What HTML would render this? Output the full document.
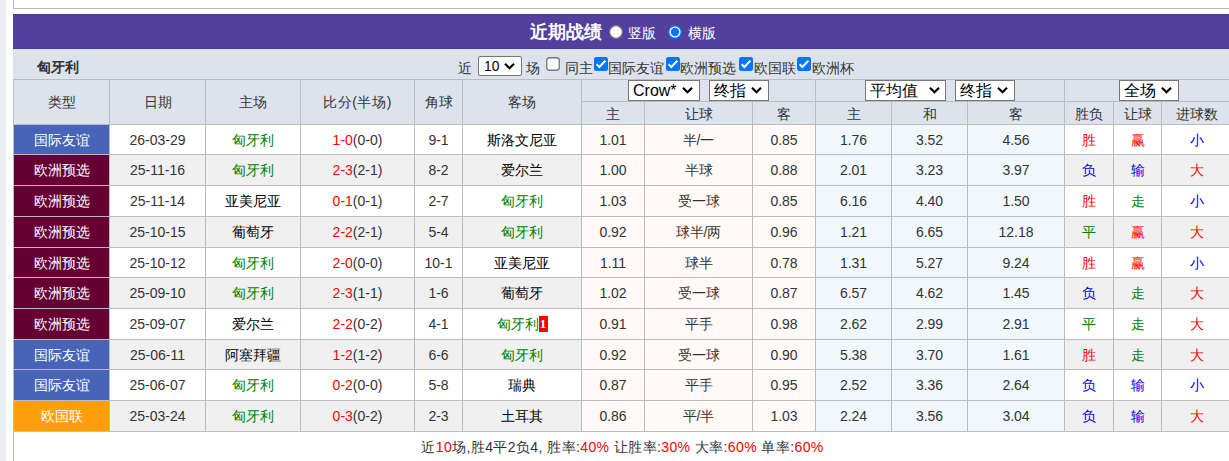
<!DOCTYPE html><html><head><meta charset="utf-8"><style>
html,body{margin:0;padding:0}
body{width:1229px;height:461px;overflow:hidden;position:relative;background:#fff;font-family:"Liberation Sans", sans-serif;font-size:14px}
.badge{display:inline-block;vertical-align:top;background:#f00;color:#fff;font-weight:bold;font-family:'Liberation Serif',serif;font-size:13px;line-height:16px;height:16px;width:9px;text-align:center;position:relative;top:0px}
</style></head><body><div style="position:absolute;left:0px;top:0px;width:6px;height:461px;background:#ebeef3"></div>
<div style="position:absolute;left:13px;top:-10px;width:1229px;height:18px;border-left:1px solid #bcbcbc;border-bottom:1px solid #b9b9b9;background:#fff"></div>
<div style="position:absolute;left:13px;top:14px;width:1216px;height:35px;background:#52409c;border-top:1px solid #49399a;border-bottom:1px solid #49399a;box-sizing:border-box"></div>
<div style="position:absolute;left:530px;top:23px;line-height:14px;white-space:nowrap;font-size:18px;font-weight:bold;color:#fff;line-height:18px">近期战绩</div>
<div style="position:absolute;left:609px;top:25px;width:14px;height:14px"><svg width="14" height="14" viewBox="0 0 14 14" style="display:block"><circle cx="7" cy="7" r="6.4" fill="#fff" stroke="#767676" stroke-width="1.2"/></svg></div>
<div style="position:absolute;left:628px;top:26px;line-height:14px;white-space:nowrap;color:#fff">竖版</div>
<div style="position:absolute;left:668px;top:25px;width:14px;height:14px"><svg width="14" height="14" viewBox="0 0 14 14" style="display:block"><circle cx="7" cy="7" r="7" fill="#0075ff"/><circle cx="7" cy="7" r="5.6" fill="#fff"/><circle cx="7" cy="7" r="4.2" fill="#0075ff"/></svg></div>
<div style="position:absolute;left:688px;top:26px;line-height:14px;white-space:nowrap;color:#fff">横版</div>
<div style="position:absolute;left:13px;top:49px;width:1216px;height:30px;background:#dce3ed"></div>
<div style="position:absolute;left:37px;top:60px;line-height:14px;white-space:nowrap;font-weight:bold;color:#333">匈牙利</div>
<div style="position:absolute;left:458px;top:61px;line-height:14px;white-space:nowrap;color:#333">近</div>
<div style="position:absolute;left:478px;top:56px;width:44px;height:20px;box-sizing:border-box;border:1px solid #767676;border-radius:2px;background:#fff"></div>
<div style="position:absolute;left:484px;top:58px;line-height:14px;white-space:nowrap;font-size:15px;color:#000;line-height:15px;transform:scaleX(0.92);transform-origin:0 0">10</div>
<div style="position:absolute;left:504px;top:63px;width:11px;height:7px"><svg width="11" height="7" viewBox="0 0 11 7" style="display:block"><path d="M1 0.8 L5.5 5.2 L10 0.8" fill="none" stroke="#000" stroke-width="2.2"/></svg></div>
<div style="position:absolute;left:526px;top:61px;line-height:14px;white-space:nowrap;color:#333">场</div>
<div style="position:absolute;left:546px;top:57px;width:14px;height:14px"><svg width="14" height="14" viewBox="0 0 14 14" style="display:block"><rect x="0.75" y="0.75" width="12.5" height="12.5" rx="2.5" fill="#fff" stroke="#767676" stroke-width="1.3"/></svg></div>
<div style="position:absolute;left:565px;top:61px;line-height:14px;white-space:nowrap;color:#333">同主</div>
<div style="position:absolute;left:594px;top:57px;width:14px;height:14px"><svg width="14" height="14" viewBox="0 0 14 14" style="display:block"><rect x="0" y="0" width="14" height="14" rx="2.5" fill="#0075ff"/><path d="M2.6 7.2 L5.4 10 L11.4 3.6" fill="none" stroke="#fff" stroke-width="2.1"/></svg></div>
<div style="position:absolute;left:608px;top:61px;line-height:14px;white-space:nowrap;color:#333">国际友谊</div>
<div style="position:absolute;left:666px;top:57px;width:14px;height:14px"><svg width="14" height="14" viewBox="0 0 14 14" style="display:block"><rect x="0" y="0" width="14" height="14" rx="2.5" fill="#0075ff"/><path d="M2.6 7.2 L5.4 10 L11.4 3.6" fill="none" stroke="#fff" stroke-width="2.1"/></svg></div>
<div style="position:absolute;left:680px;top:61px;line-height:14px;white-space:nowrap;color:#333">欧洲预选</div>
<div style="position:absolute;left:739px;top:57px;width:14px;height:14px"><svg width="14" height="14" viewBox="0 0 14 14" style="display:block"><rect x="0" y="0" width="14" height="14" rx="2.5" fill="#0075ff"/><path d="M2.6 7.2 L5.4 10 L11.4 3.6" fill="none" stroke="#fff" stroke-width="2.1"/></svg></div>
<div style="position:absolute;left:754px;top:61px;line-height:14px;white-space:nowrap;color:#333">欧国联</div>
<div style="position:absolute;left:797px;top:57px;width:14px;height:14px"><svg width="14" height="14" viewBox="0 0 14 14" style="display:block"><rect x="0" y="0" width="14" height="14" rx="2.5" fill="#0075ff"/><path d="M2.6 7.2 L5.4 10 L11.4 3.6" fill="none" stroke="#fff" stroke-width="2.1"/></svg></div>
<div style="position:absolute;left:812px;top:61px;line-height:14px;white-space:nowrap;color:#333">欧洲杯</div>
<div style="position:absolute;left:13px;top:79px;width:1216px;height:45px;background:#dce3ed"></div>
<div style="position:absolute;left:14px;top:80px;width:95px;height:44px;display:flex;align-items:center;justify-content:center;white-space:nowrap;color:#333;font-size:14px"><span style="position:relative;top:1px">类型</span></div>
<div style="position:absolute;left:110px;top:80px;width:95px;height:44px;display:flex;align-items:center;justify-content:center;white-space:nowrap;color:#333;font-size:14px"><span style="position:relative;top:1px">日期</span></div>
<div style="position:absolute;left:206px;top:80px;width:94px;height:44px;display:flex;align-items:center;justify-content:center;white-space:nowrap;color:#333;font-size:14px"><span style="position:relative;top:1px">主场</span></div>
<div style="position:absolute;left:301px;top:80px;width:113px;height:44px;display:flex;align-items:center;justify-content:center;white-space:nowrap;color:#333;font-size:14px;letter-spacing:0.6px"><span style="position:relative;top:1px">比分(半场)</span></div>
<div style="position:absolute;left:415px;top:80px;width:47px;height:44px;display:flex;align-items:center;justify-content:center;white-space:nowrap;color:#333;font-size:14px"><span style="position:relative;top:1px">角球</span></div>
<div style="position:absolute;left:463px;top:80px;width:118px;height:44px;display:flex;align-items:center;justify-content:center;white-space:nowrap;color:#333;font-size:14px"><span style="position:relative;top:1px">客场</span></div>
<div style="position:absolute;left:582px;top:102px;width:62px;height:22px;display:flex;align-items:center;justify-content:center;white-space:nowrap;color:#333;font-size:14px"><span style="position:relative;top:2px">主</span></div>
<div style="position:absolute;left:645px;top:102px;width:107px;height:22px;display:flex;align-items:center;justify-content:center;white-space:nowrap;color:#333;font-size:14px"><span style="position:relative;top:2px">让球</span></div>
<div style="position:absolute;left:753px;top:102px;width:62px;height:22px;display:flex;align-items:center;justify-content:center;white-space:nowrap;color:#333;font-size:14px"><span style="position:relative;top:2px">客</span></div>
<div style="position:absolute;left:816px;top:102px;width:75px;height:22px;display:flex;align-items:center;justify-content:center;white-space:nowrap;color:#333;font-size:14px"><span style="position:relative;top:2px">主</span></div>
<div style="position:absolute;left:892px;top:102px;width:75px;height:22px;display:flex;align-items:center;justify-content:center;white-space:nowrap;color:#333;font-size:14px"><span style="position:relative;top:2px">和</span></div>
<div style="position:absolute;left:968px;top:102px;width:96px;height:22px;display:flex;align-items:center;justify-content:center;white-space:nowrap;color:#333;font-size:14px"><span style="position:relative;top:2px">客</span></div>
<div style="position:absolute;left:1065px;top:102px;width:48px;height:22px;display:flex;align-items:center;justify-content:center;white-space:nowrap;color:#333;font-size:14px"><span style="position:relative;top:2px">胜负</span></div>
<div style="position:absolute;left:1114px;top:102px;width:47px;height:22px;display:flex;align-items:center;justify-content:center;white-space:nowrap;color:#333;font-size:14px"><span style="position:relative;top:2px">让球</span></div>
<div style="position:absolute;left:1162px;top:102px;width:70px;height:22px;display:flex;align-items:center;justify-content:center;white-space:nowrap;color:#333;font-size:14px"><span style="position:relative;top:2px">进球数</span></div>
<div style="position:absolute;left:628px;top:80px;width:72px;height:21px;box-sizing:border-box;border:1px solid #767676;background:#fff"></div>
<div style="position:absolute;left:633px;top:83px;line-height:14px;white-space:nowrap;font-size:16px;color:#000;line-height:16px">Crow*</div>
<div style="position:absolute;left:682px;top:87px;width:11px;height:7px"><svg width="11" height="7" viewBox="0 0 11 7" style="display:block"><path d="M1 0.8 L5.5 5.2 L10 0.8" fill="none" stroke="#000" stroke-width="2.2"/></svg></div>
<div style="position:absolute;left:709px;top:80px;width:60px;height:21px;box-sizing:border-box;border:1px solid #767676;background:#fff"></div>
<div style="position:absolute;left:714px;top:83px;line-height:14px;white-space:nowrap;font-size:16px;color:#000;line-height:16px">终指</div>
<div style="position:absolute;left:751px;top:87px;width:11px;height:7px"><svg width="11" height="7" viewBox="0 0 11 7" style="display:block"><path d="M1 0.8 L5.5 5.2 L10 0.8" fill="none" stroke="#000" stroke-width="2.2"/></svg></div>
<div style="position:absolute;left:865px;top:80px;width:81px;height:21px;box-sizing:border-box;border:1px solid #767676;background:#fff"></div>
<div style="position:absolute;left:870px;top:83px;line-height:14px;white-space:nowrap;font-size:16px;color:#000;line-height:16px">平均值</div>
<div style="position:absolute;left:929px;top:87px;width:11px;height:7px"><svg width="11" height="7" viewBox="0 0 11 7" style="display:block"><path d="M1 0.8 L5.5 5.2 L10 0.8" fill="none" stroke="#000" stroke-width="2.2"/></svg></div>
<div style="position:absolute;left:955px;top:80px;width:60px;height:21px;box-sizing:border-box;border:1px solid #767676;background:#fff"></div>
<div style="position:absolute;left:960px;top:83px;line-height:14px;white-space:nowrap;font-size:16px;color:#000;line-height:16px">终指</div>
<div style="position:absolute;left:997px;top:87px;width:11px;height:7px"><svg width="11" height="7" viewBox="0 0 11 7" style="display:block"><path d="M1 0.8 L5.5 5.2 L10 0.8" fill="none" stroke="#000" stroke-width="2.2"/></svg></div>
<div style="position:absolute;left:1119px;top:80px;width:60px;height:21px;box-sizing:border-box;border:1px solid #767676;background:#fff"></div>
<div style="position:absolute;left:1124px;top:83px;line-height:14px;white-space:nowrap;font-size:16px;color:#000;line-height:16px">全场</div>
<div style="position:absolute;left:1161px;top:87px;width:11px;height:7px"><svg width="11" height="7" viewBox="0 0 11 7" style="display:block"><path d="M1 0.8 L5.5 5.2 L10 0.8" fill="none" stroke="#000" stroke-width="2.2"/></svg></div>
<div style="position:absolute;left:14px;top:125px;width:95px;height:29px;display:flex;align-items:center;justify-content:center;white-space:nowrap;font-size:14px;color:#333;background:#4764b8;color:#fff;"><span style="position:relative;top:1px">国际友谊</span></div>
<div style="position:absolute;left:110px;top:125px;width:95px;height:29px;display:flex;align-items:center;justify-content:center;white-space:nowrap;font-size:14px;color:#333;"><span style="position:relative;top:0px">26-03-29</span></div>
<div style="position:absolute;left:206px;top:125px;width:94px;height:29px;display:flex;align-items:center;justify-content:center;white-space:nowrap;font-size:14px;color:#333;"><span style="position:relative;top:1px"><span style="color:#008000">匈牙利</span></span></div>
<div style="position:absolute;left:301px;top:125px;width:113px;height:29px;display:flex;align-items:center;justify-content:center;white-space:nowrap;font-size:14px;color:#333;"><span style="position:relative;top:0px"><span style="color:#ff0000">1-0</span>(0-0)</span></div>
<div style="position:absolute;left:415px;top:125px;width:47px;height:29px;display:flex;align-items:center;justify-content:center;white-space:nowrap;font-size:14px;color:#333;"><span style="position:relative;top:0px">9-1</span></div>
<div style="position:absolute;left:463px;top:125px;width:118px;height:29px;display:flex;align-items:center;justify-content:center;white-space:nowrap;font-size:14px;color:#333;"><span style="position:relative;top:1px"><span style="color:#000">斯洛文尼亚</span></span></div>
<div style="position:absolute;left:582px;top:125px;width:62px;height:29px;display:flex;align-items:center;justify-content:center;white-space:nowrap;font-size:14px;color:#333;background:#fffaf7;"><span style="position:relative;top:0px">1.01</span></div>
<div style="position:absolute;left:645px;top:125px;width:107px;height:29px;display:flex;align-items:center;justify-content:center;white-space:nowrap;font-size:14px;color:#333;background:#fffaf7;"><span style="position:relative;top:1px">半/一</span></div>
<div style="position:absolute;left:753px;top:125px;width:62px;height:29px;display:flex;align-items:center;justify-content:center;white-space:nowrap;font-size:14px;color:#333;background:#fffaf7;"><span style="position:relative;top:0px">0.85</span></div>
<div style="position:absolute;left:816px;top:125px;width:75px;height:29px;display:flex;align-items:center;justify-content:center;white-space:nowrap;font-size:14px;color:#333;background:#f0f8fc;"><span style="position:relative;top:0px">1.76</span></div>
<div style="position:absolute;left:892px;top:125px;width:75px;height:29px;display:flex;align-items:center;justify-content:center;white-space:nowrap;font-size:14px;color:#333;background:#f0f8fc;"><span style="position:relative;top:0px">3.52</span></div>
<div style="position:absolute;left:968px;top:125px;width:96px;height:29px;display:flex;align-items:center;justify-content:center;white-space:nowrap;font-size:14px;color:#333;background:#f0f8fc;"><span style="position:relative;top:0px">4.56</span></div>
<div style="position:absolute;left:1065px;top:125px;width:48px;height:29px;display:flex;align-items:center;justify-content:center;white-space:nowrap;font-size:14px;color:#333;"><span style="position:relative;top:1px"><span style="color:#ff0000">胜</span></span></div>
<div style="position:absolute;left:1114px;top:125px;width:47px;height:29px;display:flex;align-items:center;justify-content:center;white-space:nowrap;font-size:14px;color:#333;"><span style="position:relative;top:1px"><span style="color:#ff0000">赢</span></span></div>
<div style="position:absolute;left:1162px;top:125px;width:70px;height:29px;display:flex;align-items:center;justify-content:center;white-space:nowrap;font-size:14px;color:#333;"><span style="position:relative;top:1px"><span style="color:#0000ff">小</span></span></div>
<div style="position:absolute;left:14px;top:155px;width:95px;height:30px;display:flex;align-items:center;justify-content:center;white-space:nowrap;font-size:14px;color:#333;background:#660033;color:#fff;"><span style="position:relative;top:1px">欧洲预选</span></div>
<div style="position:absolute;left:110px;top:155px;width:95px;height:30px;display:flex;align-items:center;justify-content:center;white-space:nowrap;font-size:14px;color:#333;background:#f0f0f0;"><span style="position:relative;top:0px">25-11-16</span></div>
<div style="position:absolute;left:206px;top:155px;width:94px;height:30px;display:flex;align-items:center;justify-content:center;white-space:nowrap;font-size:14px;color:#333;background:#f0f0f0;"><span style="position:relative;top:1px"><span style="color:#008000">匈牙利</span></span></div>
<div style="position:absolute;left:301px;top:155px;width:113px;height:30px;display:flex;align-items:center;justify-content:center;white-space:nowrap;font-size:14px;color:#333;background:#f0f0f0;"><span style="position:relative;top:0px"><span style="color:#ff0000">2-3</span>(2-1)</span></div>
<div style="position:absolute;left:415px;top:155px;width:47px;height:30px;display:flex;align-items:center;justify-content:center;white-space:nowrap;font-size:14px;color:#333;background:#f0f0f0;"><span style="position:relative;top:0px">8-2</span></div>
<div style="position:absolute;left:463px;top:155px;width:118px;height:30px;display:flex;align-items:center;justify-content:center;white-space:nowrap;font-size:14px;color:#333;background:#f0f0f0;"><span style="position:relative;top:1px"><span style="color:#000">爱尔兰</span></span></div>
<div style="position:absolute;left:582px;top:155px;width:62px;height:30px;display:flex;align-items:center;justify-content:center;white-space:nowrap;font-size:14px;color:#333;background:#fffaf7;"><span style="position:relative;top:0px">1.00</span></div>
<div style="position:absolute;left:645px;top:155px;width:107px;height:30px;display:flex;align-items:center;justify-content:center;white-space:nowrap;font-size:14px;color:#333;background:#fffaf7;"><span style="position:relative;top:1px">半球</span></div>
<div style="position:absolute;left:753px;top:155px;width:62px;height:30px;display:flex;align-items:center;justify-content:center;white-space:nowrap;font-size:14px;color:#333;background:#fffaf7;"><span style="position:relative;top:0px">0.88</span></div>
<div style="position:absolute;left:816px;top:155px;width:75px;height:30px;display:flex;align-items:center;justify-content:center;white-space:nowrap;font-size:14px;color:#333;background:#f0f8fc;"><span style="position:relative;top:0px">2.01</span></div>
<div style="position:absolute;left:892px;top:155px;width:75px;height:30px;display:flex;align-items:center;justify-content:center;white-space:nowrap;font-size:14px;color:#333;background:#f0f8fc;"><span style="position:relative;top:0px">3.23</span></div>
<div style="position:absolute;left:968px;top:155px;width:96px;height:30px;display:flex;align-items:center;justify-content:center;white-space:nowrap;font-size:14px;color:#333;background:#f0f8fc;"><span style="position:relative;top:0px">3.97</span></div>
<div style="position:absolute;left:1065px;top:155px;width:48px;height:30px;display:flex;align-items:center;justify-content:center;white-space:nowrap;font-size:14px;color:#333;background:#f0f0f0;"><span style="position:relative;top:1px"><span style="color:#0000ff">负</span></span></div>
<div style="position:absolute;left:1114px;top:155px;width:47px;height:30px;display:flex;align-items:center;justify-content:center;white-space:nowrap;font-size:14px;color:#333;background:#f0f0f0;"><span style="position:relative;top:1px"><span style="color:#0000ff">输</span></span></div>
<div style="position:absolute;left:1162px;top:155px;width:70px;height:30px;display:flex;align-items:center;justify-content:center;white-space:nowrap;font-size:14px;color:#333;background:#f0f0f0;"><span style="position:relative;top:1px"><span style="color:#ff0000">大</span></span></div>
<div style="position:absolute;left:14px;top:186px;width:95px;height:30px;display:flex;align-items:center;justify-content:center;white-space:nowrap;font-size:14px;color:#333;background:#660033;color:#fff;"><span style="position:relative;top:1px">欧洲预选</span></div>
<div style="position:absolute;left:110px;top:186px;width:95px;height:30px;display:flex;align-items:center;justify-content:center;white-space:nowrap;font-size:14px;color:#333;"><span style="position:relative;top:0px">25-11-14</span></div>
<div style="position:absolute;left:206px;top:186px;width:94px;height:30px;display:flex;align-items:center;justify-content:center;white-space:nowrap;font-size:14px;color:#333;"><span style="position:relative;top:1px"><span style="color:#000">亚美尼亚</span></span></div>
<div style="position:absolute;left:301px;top:186px;width:113px;height:30px;display:flex;align-items:center;justify-content:center;white-space:nowrap;font-size:14px;color:#333;"><span style="position:relative;top:0px"><span style="color:#ff0000">0-1</span>(0-1)</span></div>
<div style="position:absolute;left:415px;top:186px;width:47px;height:30px;display:flex;align-items:center;justify-content:center;white-space:nowrap;font-size:14px;color:#333;"><span style="position:relative;top:0px">2-7</span></div>
<div style="position:absolute;left:463px;top:186px;width:118px;height:30px;display:flex;align-items:center;justify-content:center;white-space:nowrap;font-size:14px;color:#333;"><span style="position:relative;top:1px"><span style="color:#008000">匈牙利</span></span></div>
<div style="position:absolute;left:582px;top:186px;width:62px;height:30px;display:flex;align-items:center;justify-content:center;white-space:nowrap;font-size:14px;color:#333;background:#fffaf7;"><span style="position:relative;top:0px">1.03</span></div>
<div style="position:absolute;left:645px;top:186px;width:107px;height:30px;display:flex;align-items:center;justify-content:center;white-space:nowrap;font-size:14px;color:#333;background:#fffaf7;"><span style="position:relative;top:1px">受一球</span></div>
<div style="position:absolute;left:753px;top:186px;width:62px;height:30px;display:flex;align-items:center;justify-content:center;white-space:nowrap;font-size:14px;color:#333;background:#fffaf7;"><span style="position:relative;top:0px">0.85</span></div>
<div style="position:absolute;left:816px;top:186px;width:75px;height:30px;display:flex;align-items:center;justify-content:center;white-space:nowrap;font-size:14px;color:#333;background:#f0f8fc;"><span style="position:relative;top:0px">6.16</span></div>
<div style="position:absolute;left:892px;top:186px;width:75px;height:30px;display:flex;align-items:center;justify-content:center;white-space:nowrap;font-size:14px;color:#333;background:#f0f8fc;"><span style="position:relative;top:0px">4.40</span></div>
<div style="position:absolute;left:968px;top:186px;width:96px;height:30px;display:flex;align-items:center;justify-content:center;white-space:nowrap;font-size:14px;color:#333;background:#f0f8fc;"><span style="position:relative;top:0px">1.50</span></div>
<div style="position:absolute;left:1065px;top:186px;width:48px;height:30px;display:flex;align-items:center;justify-content:center;white-space:nowrap;font-size:14px;color:#333;"><span style="position:relative;top:1px"><span style="color:#ff0000">胜</span></span></div>
<div style="position:absolute;left:1114px;top:186px;width:47px;height:30px;display:flex;align-items:center;justify-content:center;white-space:nowrap;font-size:14px;color:#333;"><span style="position:relative;top:1px"><span style="color:#008000">走</span></span></div>
<div style="position:absolute;left:1162px;top:186px;width:70px;height:30px;display:flex;align-items:center;justify-content:center;white-space:nowrap;font-size:14px;color:#333;"><span style="position:relative;top:1px"><span style="color:#0000ff">小</span></span></div>
<div style="position:absolute;left:14px;top:217px;width:95px;height:30px;display:flex;align-items:center;justify-content:center;white-space:nowrap;font-size:14px;color:#333;background:#660033;color:#fff;"><span style="position:relative;top:1px">欧洲预选</span></div>
<div style="position:absolute;left:110px;top:217px;width:95px;height:30px;display:flex;align-items:center;justify-content:center;white-space:nowrap;font-size:14px;color:#333;background:#f0f0f0;"><span style="position:relative;top:0px">25-10-15</span></div>
<div style="position:absolute;left:206px;top:217px;width:94px;height:30px;display:flex;align-items:center;justify-content:center;white-space:nowrap;font-size:14px;color:#333;background:#f0f0f0;"><span style="position:relative;top:1px"><span style="color:#000">葡萄牙</span></span></div>
<div style="position:absolute;left:301px;top:217px;width:113px;height:30px;display:flex;align-items:center;justify-content:center;white-space:nowrap;font-size:14px;color:#333;background:#f0f0f0;"><span style="position:relative;top:0px"><span style="color:#ff0000">2-2</span>(2-1)</span></div>
<div style="position:absolute;left:415px;top:217px;width:47px;height:30px;display:flex;align-items:center;justify-content:center;white-space:nowrap;font-size:14px;color:#333;background:#f0f0f0;"><span style="position:relative;top:0px">5-4</span></div>
<div style="position:absolute;left:463px;top:217px;width:118px;height:30px;display:flex;align-items:center;justify-content:center;white-space:nowrap;font-size:14px;color:#333;background:#f0f0f0;"><span style="position:relative;top:1px"><span style="color:#008000">匈牙利</span></span></div>
<div style="position:absolute;left:582px;top:217px;width:62px;height:30px;display:flex;align-items:center;justify-content:center;white-space:nowrap;font-size:14px;color:#333;background:#fffaf7;"><span style="position:relative;top:0px">0.92</span></div>
<div style="position:absolute;left:645px;top:217px;width:107px;height:30px;display:flex;align-items:center;justify-content:center;white-space:nowrap;font-size:14px;color:#333;background:#fffaf7;"><span style="position:relative;top:1px">球半/两</span></div>
<div style="position:absolute;left:753px;top:217px;width:62px;height:30px;display:flex;align-items:center;justify-content:center;white-space:nowrap;font-size:14px;color:#333;background:#fffaf7;"><span style="position:relative;top:0px">0.96</span></div>
<div style="position:absolute;left:816px;top:217px;width:75px;height:30px;display:flex;align-items:center;justify-content:center;white-space:nowrap;font-size:14px;color:#333;background:#f0f8fc;"><span style="position:relative;top:0px">1.21</span></div>
<div style="position:absolute;left:892px;top:217px;width:75px;height:30px;display:flex;align-items:center;justify-content:center;white-space:nowrap;font-size:14px;color:#333;background:#f0f8fc;"><span style="position:relative;top:0px">6.65</span></div>
<div style="position:absolute;left:968px;top:217px;width:96px;height:30px;display:flex;align-items:center;justify-content:center;white-space:nowrap;font-size:14px;color:#333;background:#f0f8fc;"><span style="position:relative;top:0px">12.18</span></div>
<div style="position:absolute;left:1065px;top:217px;width:48px;height:30px;display:flex;align-items:center;justify-content:center;white-space:nowrap;font-size:14px;color:#333;background:#f0f0f0;"><span style="position:relative;top:1px"><span style="color:#008000">平</span></span></div>
<div style="position:absolute;left:1114px;top:217px;width:47px;height:30px;display:flex;align-items:center;justify-content:center;white-space:nowrap;font-size:14px;color:#333;background:#f0f0f0;"><span style="position:relative;top:1px"><span style="color:#ff0000">赢</span></span></div>
<div style="position:absolute;left:1162px;top:217px;width:70px;height:30px;display:flex;align-items:center;justify-content:center;white-space:nowrap;font-size:14px;color:#333;background:#f0f0f0;"><span style="position:relative;top:1px"><span style="color:#ff0000">大</span></span></div>
<div style="position:absolute;left:14px;top:248px;width:95px;height:29px;display:flex;align-items:center;justify-content:center;white-space:nowrap;font-size:14px;color:#333;background:#660033;color:#fff;"><span style="position:relative;top:1px">欧洲预选</span></div>
<div style="position:absolute;left:110px;top:248px;width:95px;height:29px;display:flex;align-items:center;justify-content:center;white-space:nowrap;font-size:14px;color:#333;"><span style="position:relative;top:0px">25-10-12</span></div>
<div style="position:absolute;left:206px;top:248px;width:94px;height:29px;display:flex;align-items:center;justify-content:center;white-space:nowrap;font-size:14px;color:#333;"><span style="position:relative;top:1px"><span style="color:#008000">匈牙利</span></span></div>
<div style="position:absolute;left:301px;top:248px;width:113px;height:29px;display:flex;align-items:center;justify-content:center;white-space:nowrap;font-size:14px;color:#333;"><span style="position:relative;top:0px"><span style="color:#ff0000">2-0</span>(0-0)</span></div>
<div style="position:absolute;left:415px;top:248px;width:47px;height:29px;display:flex;align-items:center;justify-content:center;white-space:nowrap;font-size:14px;color:#333;"><span style="position:relative;top:0px">10-1</span></div>
<div style="position:absolute;left:463px;top:248px;width:118px;height:29px;display:flex;align-items:center;justify-content:center;white-space:nowrap;font-size:14px;color:#333;"><span style="position:relative;top:1px"><span style="color:#000">亚美尼亚</span></span></div>
<div style="position:absolute;left:582px;top:248px;width:62px;height:29px;display:flex;align-items:center;justify-content:center;white-space:nowrap;font-size:14px;color:#333;background:#fffaf7;"><span style="position:relative;top:0px">1.11</span></div>
<div style="position:absolute;left:645px;top:248px;width:107px;height:29px;display:flex;align-items:center;justify-content:center;white-space:nowrap;font-size:14px;color:#333;background:#fffaf7;"><span style="position:relative;top:1px">球半</span></div>
<div style="position:absolute;left:753px;top:248px;width:62px;height:29px;display:flex;align-items:center;justify-content:center;white-space:nowrap;font-size:14px;color:#333;background:#fffaf7;"><span style="position:relative;top:0px">0.78</span></div>
<div style="position:absolute;left:816px;top:248px;width:75px;height:29px;display:flex;align-items:center;justify-content:center;white-space:nowrap;font-size:14px;color:#333;background:#f0f8fc;"><span style="position:relative;top:0px">1.31</span></div>
<div style="position:absolute;left:892px;top:248px;width:75px;height:29px;display:flex;align-items:center;justify-content:center;white-space:nowrap;font-size:14px;color:#333;background:#f0f8fc;"><span style="position:relative;top:0px">5.27</span></div>
<div style="position:absolute;left:968px;top:248px;width:96px;height:29px;display:flex;align-items:center;justify-content:center;white-space:nowrap;font-size:14px;color:#333;background:#f0f8fc;"><span style="position:relative;top:0px">9.24</span></div>
<div style="position:absolute;left:1065px;top:248px;width:48px;height:29px;display:flex;align-items:center;justify-content:center;white-space:nowrap;font-size:14px;color:#333;"><span style="position:relative;top:1px"><span style="color:#ff0000">胜</span></span></div>
<div style="position:absolute;left:1114px;top:248px;width:47px;height:29px;display:flex;align-items:center;justify-content:center;white-space:nowrap;font-size:14px;color:#333;"><span style="position:relative;top:1px"><span style="color:#ff0000">赢</span></span></div>
<div style="position:absolute;left:1162px;top:248px;width:70px;height:29px;display:flex;align-items:center;justify-content:center;white-space:nowrap;font-size:14px;color:#333;"><span style="position:relative;top:1px"><span style="color:#0000ff">小</span></span></div>
<div style="position:absolute;left:14px;top:278px;width:95px;height:30px;display:flex;align-items:center;justify-content:center;white-space:nowrap;font-size:14px;color:#333;background:#660033;color:#fff;"><span style="position:relative;top:1px">欧洲预选</span></div>
<div style="position:absolute;left:110px;top:278px;width:95px;height:30px;display:flex;align-items:center;justify-content:center;white-space:nowrap;font-size:14px;color:#333;background:#f0f0f0;"><span style="position:relative;top:0px">25-09-10</span></div>
<div style="position:absolute;left:206px;top:278px;width:94px;height:30px;display:flex;align-items:center;justify-content:center;white-space:nowrap;font-size:14px;color:#333;background:#f0f0f0;"><span style="position:relative;top:1px"><span style="color:#008000">匈牙利</span></span></div>
<div style="position:absolute;left:301px;top:278px;width:113px;height:30px;display:flex;align-items:center;justify-content:center;white-space:nowrap;font-size:14px;color:#333;background:#f0f0f0;"><span style="position:relative;top:0px"><span style="color:#ff0000">2-3</span>(1-1)</span></div>
<div style="position:absolute;left:415px;top:278px;width:47px;height:30px;display:flex;align-items:center;justify-content:center;white-space:nowrap;font-size:14px;color:#333;background:#f0f0f0;"><span style="position:relative;top:0px">1-6</span></div>
<div style="position:absolute;left:463px;top:278px;width:118px;height:30px;display:flex;align-items:center;justify-content:center;white-space:nowrap;font-size:14px;color:#333;background:#f0f0f0;"><span style="position:relative;top:1px"><span style="color:#000">葡萄牙</span></span></div>
<div style="position:absolute;left:582px;top:278px;width:62px;height:30px;display:flex;align-items:center;justify-content:center;white-space:nowrap;font-size:14px;color:#333;background:#fffaf7;"><span style="position:relative;top:0px">1.02</span></div>
<div style="position:absolute;left:645px;top:278px;width:107px;height:30px;display:flex;align-items:center;justify-content:center;white-space:nowrap;font-size:14px;color:#333;background:#fffaf7;"><span style="position:relative;top:1px">受一球</span></div>
<div style="position:absolute;left:753px;top:278px;width:62px;height:30px;display:flex;align-items:center;justify-content:center;white-space:nowrap;font-size:14px;color:#333;background:#fffaf7;"><span style="position:relative;top:0px">0.87</span></div>
<div style="position:absolute;left:816px;top:278px;width:75px;height:30px;display:flex;align-items:center;justify-content:center;white-space:nowrap;font-size:14px;color:#333;background:#f0f8fc;"><span style="position:relative;top:0px">6.57</span></div>
<div style="position:absolute;left:892px;top:278px;width:75px;height:30px;display:flex;align-items:center;justify-content:center;white-space:nowrap;font-size:14px;color:#333;background:#f0f8fc;"><span style="position:relative;top:0px">4.62</span></div>
<div style="position:absolute;left:968px;top:278px;width:96px;height:30px;display:flex;align-items:center;justify-content:center;white-space:nowrap;font-size:14px;color:#333;background:#f0f8fc;"><span style="position:relative;top:0px">1.45</span></div>
<div style="position:absolute;left:1065px;top:278px;width:48px;height:30px;display:flex;align-items:center;justify-content:center;white-space:nowrap;font-size:14px;color:#333;background:#f0f0f0;"><span style="position:relative;top:1px"><span style="color:#0000ff">负</span></span></div>
<div style="position:absolute;left:1114px;top:278px;width:47px;height:30px;display:flex;align-items:center;justify-content:center;white-space:nowrap;font-size:14px;color:#333;background:#f0f0f0;"><span style="position:relative;top:1px"><span style="color:#008000">走</span></span></div>
<div style="position:absolute;left:1162px;top:278px;width:70px;height:30px;display:flex;align-items:center;justify-content:center;white-space:nowrap;font-size:14px;color:#333;background:#f0f0f0;"><span style="position:relative;top:1px"><span style="color:#ff0000">大</span></span></div>
<div style="position:absolute;left:14px;top:309px;width:95px;height:30px;display:flex;align-items:center;justify-content:center;white-space:nowrap;font-size:14px;color:#333;background:#660033;color:#fff;"><span style="position:relative;top:1px">欧洲预选</span></div>
<div style="position:absolute;left:110px;top:309px;width:95px;height:30px;display:flex;align-items:center;justify-content:center;white-space:nowrap;font-size:14px;color:#333;"><span style="position:relative;top:0px">25-09-07</span></div>
<div style="position:absolute;left:206px;top:309px;width:94px;height:30px;display:flex;align-items:center;justify-content:center;white-space:nowrap;font-size:14px;color:#333;"><span style="position:relative;top:1px"><span style="color:#000">爱尔兰</span></span></div>
<div style="position:absolute;left:301px;top:309px;width:113px;height:30px;display:flex;align-items:center;justify-content:center;white-space:nowrap;font-size:14px;color:#333;"><span style="position:relative;top:0px"><span style="color:#ff0000">2-2</span>(0-2)</span></div>
<div style="position:absolute;left:415px;top:309px;width:47px;height:30px;display:flex;align-items:center;justify-content:center;white-space:nowrap;font-size:14px;color:#333;"><span style="position:relative;top:0px">4-1</span></div>
<div style="position:absolute;left:463px;top:309px;width:118px;height:30px;display:flex;align-items:center;justify-content:center;white-space:nowrap;font-size:14px;color:#333;"><span style="position:relative;top:1px"><span style="color:#008000">匈牙利</span><span class="badge">1</span></span></div>
<div style="position:absolute;left:582px;top:309px;width:62px;height:30px;display:flex;align-items:center;justify-content:center;white-space:nowrap;font-size:14px;color:#333;background:#fffaf7;"><span style="position:relative;top:0px">0.91</span></div>
<div style="position:absolute;left:645px;top:309px;width:107px;height:30px;display:flex;align-items:center;justify-content:center;white-space:nowrap;font-size:14px;color:#333;background:#fffaf7;"><span style="position:relative;top:1px">平手</span></div>
<div style="position:absolute;left:753px;top:309px;width:62px;height:30px;display:flex;align-items:center;justify-content:center;white-space:nowrap;font-size:14px;color:#333;background:#fffaf7;"><span style="position:relative;top:0px">0.98</span></div>
<div style="position:absolute;left:816px;top:309px;width:75px;height:30px;display:flex;align-items:center;justify-content:center;white-space:nowrap;font-size:14px;color:#333;background:#f0f8fc;"><span style="position:relative;top:0px">2.62</span></div>
<div style="position:absolute;left:892px;top:309px;width:75px;height:30px;display:flex;align-items:center;justify-content:center;white-space:nowrap;font-size:14px;color:#333;background:#f0f8fc;"><span style="position:relative;top:0px">2.99</span></div>
<div style="position:absolute;left:968px;top:309px;width:96px;height:30px;display:flex;align-items:center;justify-content:center;white-space:nowrap;font-size:14px;color:#333;background:#f0f8fc;"><span style="position:relative;top:0px">2.91</span></div>
<div style="position:absolute;left:1065px;top:309px;width:48px;height:30px;display:flex;align-items:center;justify-content:center;white-space:nowrap;font-size:14px;color:#333;"><span style="position:relative;top:1px"><span style="color:#008000">平</span></span></div>
<div style="position:absolute;left:1114px;top:309px;width:47px;height:30px;display:flex;align-items:center;justify-content:center;white-space:nowrap;font-size:14px;color:#333;"><span style="position:relative;top:1px"><span style="color:#008000">走</span></span></div>
<div style="position:absolute;left:1162px;top:309px;width:70px;height:30px;display:flex;align-items:center;justify-content:center;white-space:nowrap;font-size:14px;color:#333;"><span style="position:relative;top:1px"><span style="color:#ff0000">大</span></span></div>
<div style="position:absolute;left:14px;top:340px;width:95px;height:29px;display:flex;align-items:center;justify-content:center;white-space:nowrap;font-size:14px;color:#333;background:#4764b8;color:#fff;"><span style="position:relative;top:1px">国际友谊</span></div>
<div style="position:absolute;left:110px;top:340px;width:95px;height:29px;display:flex;align-items:center;justify-content:center;white-space:nowrap;font-size:14px;color:#333;background:#f0f0f0;"><span style="position:relative;top:0px">25-06-11</span></div>
<div style="position:absolute;left:206px;top:340px;width:94px;height:29px;display:flex;align-items:center;justify-content:center;white-space:nowrap;font-size:14px;color:#333;background:#f0f0f0;"><span style="position:relative;top:1px"><span style="color:#000">阿塞拜疆</span></span></div>
<div style="position:absolute;left:301px;top:340px;width:113px;height:29px;display:flex;align-items:center;justify-content:center;white-space:nowrap;font-size:14px;color:#333;background:#f0f0f0;"><span style="position:relative;top:0px"><span style="color:#ff0000">1-2</span>(1-2)</span></div>
<div style="position:absolute;left:415px;top:340px;width:47px;height:29px;display:flex;align-items:center;justify-content:center;white-space:nowrap;font-size:14px;color:#333;background:#f0f0f0;"><span style="position:relative;top:0px">6-6</span></div>
<div style="position:absolute;left:463px;top:340px;width:118px;height:29px;display:flex;align-items:center;justify-content:center;white-space:nowrap;font-size:14px;color:#333;background:#f0f0f0;"><span style="position:relative;top:1px"><span style="color:#008000">匈牙利</span></span></div>
<div style="position:absolute;left:582px;top:340px;width:62px;height:29px;display:flex;align-items:center;justify-content:center;white-space:nowrap;font-size:14px;color:#333;background:#fffaf7;"><span style="position:relative;top:0px">0.92</span></div>
<div style="position:absolute;left:645px;top:340px;width:107px;height:29px;display:flex;align-items:center;justify-content:center;white-space:nowrap;font-size:14px;color:#333;background:#fffaf7;"><span style="position:relative;top:1px">受一球</span></div>
<div style="position:absolute;left:753px;top:340px;width:62px;height:29px;display:flex;align-items:center;justify-content:center;white-space:nowrap;font-size:14px;color:#333;background:#fffaf7;"><span style="position:relative;top:0px">0.90</span></div>
<div style="position:absolute;left:816px;top:340px;width:75px;height:29px;display:flex;align-items:center;justify-content:center;white-space:nowrap;font-size:14px;color:#333;background:#f0f8fc;"><span style="position:relative;top:0px">5.38</span></div>
<div style="position:absolute;left:892px;top:340px;width:75px;height:29px;display:flex;align-items:center;justify-content:center;white-space:nowrap;font-size:14px;color:#333;background:#f0f8fc;"><span style="position:relative;top:0px">3.70</span></div>
<div style="position:absolute;left:968px;top:340px;width:96px;height:29px;display:flex;align-items:center;justify-content:center;white-space:nowrap;font-size:14px;color:#333;background:#f0f8fc;"><span style="position:relative;top:0px">1.61</span></div>
<div style="position:absolute;left:1065px;top:340px;width:48px;height:29px;display:flex;align-items:center;justify-content:center;white-space:nowrap;font-size:14px;color:#333;background:#f0f0f0;"><span style="position:relative;top:1px"><span style="color:#ff0000">胜</span></span></div>
<div style="position:absolute;left:1114px;top:340px;width:47px;height:29px;display:flex;align-items:center;justify-content:center;white-space:nowrap;font-size:14px;color:#333;background:#f0f0f0;"><span style="position:relative;top:1px"><span style="color:#008000">走</span></span></div>
<div style="position:absolute;left:1162px;top:340px;width:70px;height:29px;display:flex;align-items:center;justify-content:center;white-space:nowrap;font-size:14px;color:#333;background:#f0f0f0;"><span style="position:relative;top:1px"><span style="color:#ff0000">大</span></span></div>
<div style="position:absolute;left:14px;top:370px;width:95px;height:30px;display:flex;align-items:center;justify-content:center;white-space:nowrap;font-size:14px;color:#333;background:#4764b8;color:#fff;"><span style="position:relative;top:1px">国际友谊</span></div>
<div style="position:absolute;left:110px;top:370px;width:95px;height:30px;display:flex;align-items:center;justify-content:center;white-space:nowrap;font-size:14px;color:#333;"><span style="position:relative;top:0px">25-06-07</span></div>
<div style="position:absolute;left:206px;top:370px;width:94px;height:30px;display:flex;align-items:center;justify-content:center;white-space:nowrap;font-size:14px;color:#333;"><span style="position:relative;top:1px"><span style="color:#008000">匈牙利</span></span></div>
<div style="position:absolute;left:301px;top:370px;width:113px;height:30px;display:flex;align-items:center;justify-content:center;white-space:nowrap;font-size:14px;color:#333;"><span style="position:relative;top:0px"><span style="color:#ff0000">0-2</span>(0-0)</span></div>
<div style="position:absolute;left:415px;top:370px;width:47px;height:30px;display:flex;align-items:center;justify-content:center;white-space:nowrap;font-size:14px;color:#333;"><span style="position:relative;top:0px">5-8</span></div>
<div style="position:absolute;left:463px;top:370px;width:118px;height:30px;display:flex;align-items:center;justify-content:center;white-space:nowrap;font-size:14px;color:#333;"><span style="position:relative;top:1px"><span style="color:#000">瑞典</span></span></div>
<div style="position:absolute;left:582px;top:370px;width:62px;height:30px;display:flex;align-items:center;justify-content:center;white-space:nowrap;font-size:14px;color:#333;background:#fffaf7;"><span style="position:relative;top:0px">0.87</span></div>
<div style="position:absolute;left:645px;top:370px;width:107px;height:30px;display:flex;align-items:center;justify-content:center;white-space:nowrap;font-size:14px;color:#333;background:#fffaf7;"><span style="position:relative;top:1px">平手</span></div>
<div style="position:absolute;left:753px;top:370px;width:62px;height:30px;display:flex;align-items:center;justify-content:center;white-space:nowrap;font-size:14px;color:#333;background:#fffaf7;"><span style="position:relative;top:0px">0.95</span></div>
<div style="position:absolute;left:816px;top:370px;width:75px;height:30px;display:flex;align-items:center;justify-content:center;white-space:nowrap;font-size:14px;color:#333;background:#f0f8fc;"><span style="position:relative;top:0px">2.52</span></div>
<div style="position:absolute;left:892px;top:370px;width:75px;height:30px;display:flex;align-items:center;justify-content:center;white-space:nowrap;font-size:14px;color:#333;background:#f0f8fc;"><span style="position:relative;top:0px">3.36</span></div>
<div style="position:absolute;left:968px;top:370px;width:96px;height:30px;display:flex;align-items:center;justify-content:center;white-space:nowrap;font-size:14px;color:#333;background:#f0f8fc;"><span style="position:relative;top:0px">2.64</span></div>
<div style="position:absolute;left:1065px;top:370px;width:48px;height:30px;display:flex;align-items:center;justify-content:center;white-space:nowrap;font-size:14px;color:#333;"><span style="position:relative;top:1px"><span style="color:#0000ff">负</span></span></div>
<div style="position:absolute;left:1114px;top:370px;width:47px;height:30px;display:flex;align-items:center;justify-content:center;white-space:nowrap;font-size:14px;color:#333;"><span style="position:relative;top:1px"><span style="color:#0000ff">输</span></span></div>
<div style="position:absolute;left:1162px;top:370px;width:70px;height:30px;display:flex;align-items:center;justify-content:center;white-space:nowrap;font-size:14px;color:#333;"><span style="position:relative;top:1px"><span style="color:#0000ff">小</span></span></div>
<div style="position:absolute;left:14px;top:401px;width:95px;height:30px;display:flex;align-items:center;justify-content:center;white-space:nowrap;font-size:14px;color:#333;background:#fd9e0c;color:#fff;"><span style="position:relative;top:1px">欧国联</span></div>
<div style="position:absolute;left:110px;top:401px;width:95px;height:30px;display:flex;align-items:center;justify-content:center;white-space:nowrap;font-size:14px;color:#333;background:#f0f0f0;"><span style="position:relative;top:0px">25-03-24</span></div>
<div style="position:absolute;left:206px;top:401px;width:94px;height:30px;display:flex;align-items:center;justify-content:center;white-space:nowrap;font-size:14px;color:#333;background:#f0f0f0;"><span style="position:relative;top:1px"><span style="color:#008000">匈牙利</span></span></div>
<div style="position:absolute;left:301px;top:401px;width:113px;height:30px;display:flex;align-items:center;justify-content:center;white-space:nowrap;font-size:14px;color:#333;background:#f0f0f0;"><span style="position:relative;top:0px"><span style="color:#ff0000">0-3</span>(0-2)</span></div>
<div style="position:absolute;left:415px;top:401px;width:47px;height:30px;display:flex;align-items:center;justify-content:center;white-space:nowrap;font-size:14px;color:#333;background:#f0f0f0;"><span style="position:relative;top:0px">2-3</span></div>
<div style="position:absolute;left:463px;top:401px;width:118px;height:30px;display:flex;align-items:center;justify-content:center;white-space:nowrap;font-size:14px;color:#333;background:#f0f0f0;"><span style="position:relative;top:1px"><span style="color:#000">土耳其</span></span></div>
<div style="position:absolute;left:582px;top:401px;width:62px;height:30px;display:flex;align-items:center;justify-content:center;white-space:nowrap;font-size:14px;color:#333;background:#fffaf7;"><span style="position:relative;top:0px">0.86</span></div>
<div style="position:absolute;left:645px;top:401px;width:107px;height:30px;display:flex;align-items:center;justify-content:center;white-space:nowrap;font-size:14px;color:#333;background:#fffaf7;"><span style="position:relative;top:1px">平/半</span></div>
<div style="position:absolute;left:753px;top:401px;width:62px;height:30px;display:flex;align-items:center;justify-content:center;white-space:nowrap;font-size:14px;color:#333;background:#fffaf7;"><span style="position:relative;top:0px">1.03</span></div>
<div style="position:absolute;left:816px;top:401px;width:75px;height:30px;display:flex;align-items:center;justify-content:center;white-space:nowrap;font-size:14px;color:#333;background:#f0f8fc;"><span style="position:relative;top:0px">2.24</span></div>
<div style="position:absolute;left:892px;top:401px;width:75px;height:30px;display:flex;align-items:center;justify-content:center;white-space:nowrap;font-size:14px;color:#333;background:#f0f8fc;"><span style="position:relative;top:0px">3.56</span></div>
<div style="position:absolute;left:968px;top:401px;width:96px;height:30px;display:flex;align-items:center;justify-content:center;white-space:nowrap;font-size:14px;color:#333;background:#f0f8fc;"><span style="position:relative;top:0px">3.04</span></div>
<div style="position:absolute;left:1065px;top:401px;width:48px;height:30px;display:flex;align-items:center;justify-content:center;white-space:nowrap;font-size:14px;color:#333;background:#f0f0f0;"><span style="position:relative;top:1px"><span style="color:#0000ff">负</span></span></div>
<div style="position:absolute;left:1114px;top:401px;width:47px;height:30px;display:flex;align-items:center;justify-content:center;white-space:nowrap;font-size:14px;color:#333;background:#f0f0f0;"><span style="position:relative;top:1px"><span style="color:#0000ff">输</span></span></div>
<div style="position:absolute;left:1162px;top:401px;width:70px;height:30px;display:flex;align-items:center;justify-content:center;white-space:nowrap;font-size:14px;color:#333;background:#f0f0f0;"><span style="position:relative;top:1px"><span style="color:#ff0000">大</span></span></div>
<div style="position:absolute;left:13px;top:432px;width:1216px;height:29px;background:#fff"></div>
<div style="position:absolute;left:13px;width:1219px;top:432px;height:29px;display:flex;align-items:center;justify-content:center;font-size:14px;color:#333;white-space:nowrap;letter-spacing:0.4px"><span style="position:relative;top:1px">近<span style="color:#ff0000">10</span>场,胜4平2负4, 胜率:<span style="color:#ff0000">40%</span> 让胜率:<span style="color:#ff0000">30%</span> 大率:<span style="color:#ff0000">60%</span> 单率:<span style="color:#ff0000">60%</span></span></div>
<div style="position:absolute;left:13px;top:79px;width:1216px;height:1px;background:#bcbcbc"></div>
<div style="position:absolute;left:581px;top:101px;width:648px;height:1px;background:#bcbcbc"></div>
<div style="position:absolute;left:13px;top:124px;width:1216px;height:1px;background:#bcbcbc"></div>
<div style="position:absolute;left:13px;top:154px;width:1216px;height:1px;background:#bcbcbc"></div>
<div style="position:absolute;left:13px;top:185px;width:1216px;height:1px;background:#bcbcbc"></div>
<div style="position:absolute;left:13px;top:216px;width:1216px;height:1px;background:#bcbcbc"></div>
<div style="position:absolute;left:13px;top:247px;width:1216px;height:1px;background:#bcbcbc"></div>
<div style="position:absolute;left:13px;top:277px;width:1216px;height:1px;background:#bcbcbc"></div>
<div style="position:absolute;left:13px;top:308px;width:1216px;height:1px;background:#bcbcbc"></div>
<div style="position:absolute;left:13px;top:339px;width:1216px;height:1px;background:#bcbcbc"></div>
<div style="position:absolute;left:13px;top:369px;width:1216px;height:1px;background:#bcbcbc"></div>
<div style="position:absolute;left:13px;top:400px;width:1216px;height:1px;background:#bcbcbc"></div>
<div style="position:absolute;left:13px;top:431px;width:1216px;height:1px;background:#bcbcbc"></div>
<div style="position:absolute;left:13px;top:79px;width:1px;height:353px;background:#bcbcbc"></div>
<div style="position:absolute;left:109px;top:79px;width:1px;height:353px;background:#bcbcbc"></div>
<div style="position:absolute;left:205px;top:79px;width:1px;height:353px;background:#bcbcbc"></div>
<div style="position:absolute;left:300px;top:79px;width:1px;height:353px;background:#bcbcbc"></div>
<div style="position:absolute;left:414px;top:79px;width:1px;height:353px;background:#bcbcbc"></div>
<div style="position:absolute;left:462px;top:79px;width:1px;height:353px;background:#bcbcbc"></div>
<div style="position:absolute;left:581px;top:79px;width:1px;height:353px;background:#bcbcbc"></div>
<div style="position:absolute;left:644px;top:101px;width:1px;height:331px;background:#bcbcbc"></div>
<div style="position:absolute;left:752px;top:101px;width:1px;height:331px;background:#bcbcbc"></div>
<div style="position:absolute;left:815px;top:79px;width:1px;height:353px;background:#bcbcbc"></div>
<div style="position:absolute;left:891px;top:101px;width:1px;height:331px;background:#bcbcbc"></div>
<div style="position:absolute;left:967px;top:101px;width:1px;height:331px;background:#bcbcbc"></div>
<div style="position:absolute;left:1064px;top:79px;width:1px;height:353px;background:#bcbcbc"></div>
<div style="position:absolute;left:1113px;top:101px;width:1px;height:331px;background:#bcbcbc"></div>
<div style="position:absolute;left:1161px;top:101px;width:1px;height:331px;background:#bcbcbc"></div>
<div style="position:absolute;left:13px;top:431px;width:1px;height:30px;background:#bcbcbc"></div></body></html>
